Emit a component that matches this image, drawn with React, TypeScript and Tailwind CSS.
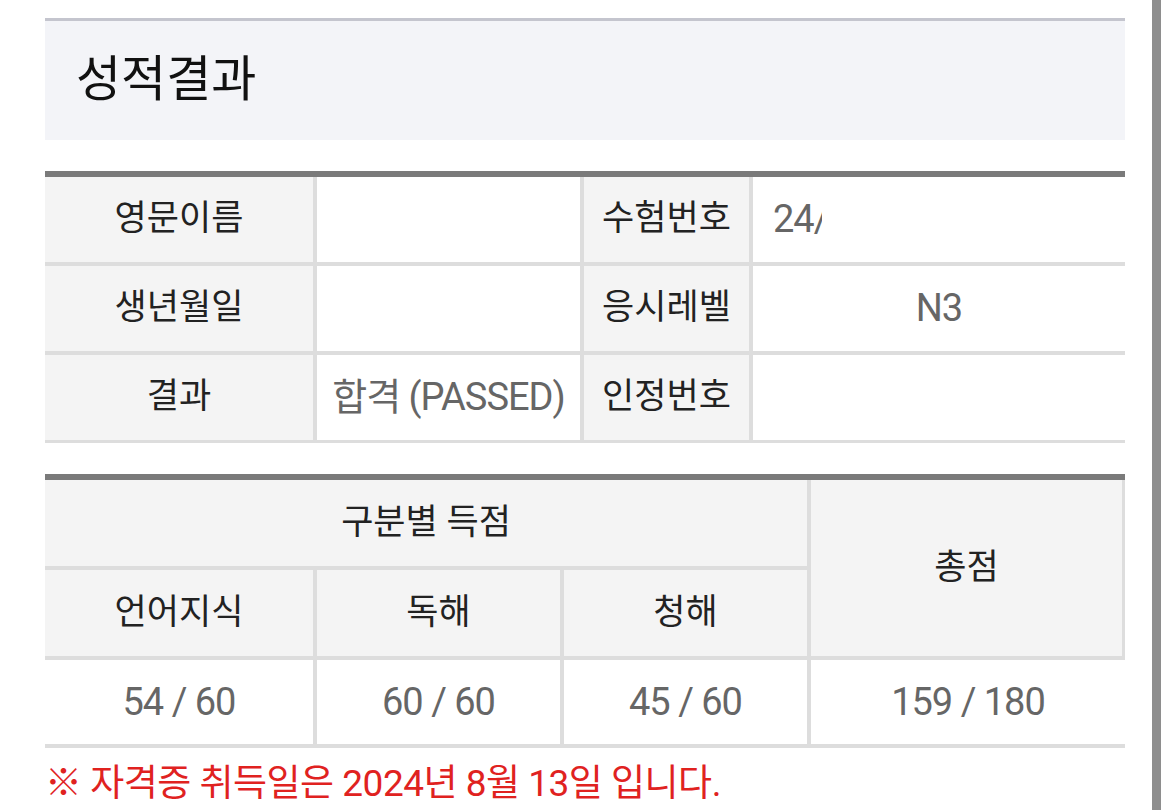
import React from "react";

const label =
  "bg-[#f4f4f4] flex items-center justify-center text-[#222] text-[35px]";
const value =
  "bg-white flex items-center justify-center text-[#666] text-[38px] tracking-[-1px]";

export default function App() {
  return (
    <div
      className="flex min-h-[810px] bg-white"
      style={{ fontFamily: 'Roboto, "Noto Sans CJK KR", sans-serif' }}
    >
      <div className="flex-1 pl-[45px] pr-[27px] pt-[18px]">
        {/* Title */}
        <div className="h-[122px] border-t-[3px] border-[#c4c5ce] bg-[#f3f4f8] flex items-center pl-[31px] pb-[3px]">
          <h1 className="text-[49px] text-[#111] leading-none">성적결과</h1>
        </div>

        {/* Applicant info */}
        <div className="mt-[31px] border-t-[6px] border-[#7a7a7a] bg-[#dddddd] pb-[3px] grid grid-cols-[268px_263px_165px_1fr] auto-rows-[85px] gap-[4px]">
          <div className={label}>영문이름</div>
          <div className="bg-white"></div>
          <div className={label}>수험번호</div>
          <div className="bg-white flex items-center pl-[20px] text-[#666] text-[38px] tracking-[-1px]">
            <span className="w-[49px] overflow-hidden whitespace-nowrap">24/0000</span>
          </div>

          <div className={label}>생년월일</div>
          <div className="bg-white"></div>
          <div className={label}>응시레벨</div>
          <div className={value}>N3</div>

          <div className={label}>결과</div>
          <div className={value}>합격 (PASSED)</div>
          <div className={label}>인정번호</div>
          <div className="bg-white"></div>
        </div>

        {/* Scores */}
        <div className="mt-[31px] border-t-[6px] border-[#7a7a7a] bg-[#dddddd] pb-[4px] grid grid-cols-[268px_243px_243px_1fr] grid-rows-[86px_86px_84px] gap-[4px]">
          <div className={`${label} col-span-3`}>구분별 득점</div>
          <div className={`${label} row-span-2 border-r-[3px] border-[#dddddd]`}>총점</div>
          <div className={label}>언어지식</div>
          <div className={label}>독해</div>
          <div className={label}>청해</div>
          <div className={value}>54 / 60</div>
          <div className={value}>60 / 60</div>
          <div className={value}>45 / 60</div>
          <div className={value}>159 / 180</div>
        </div>

        <p className="mt-[13px] text-[37px] text-[#e0221f] leading-[46px] tracking-[-0.5px] whitespace-nowrap">
          ※ 자격증 취득일은 2024년 8월 13일 입니다.
        </p>
      </div>

      {/* scroll indicator */}
      <div className="w-[9px] bg-[#8e8e8e] shrink-0"></div>
      <div className="w-[8px] shrink-0"></div>
    </div>
  );
}
